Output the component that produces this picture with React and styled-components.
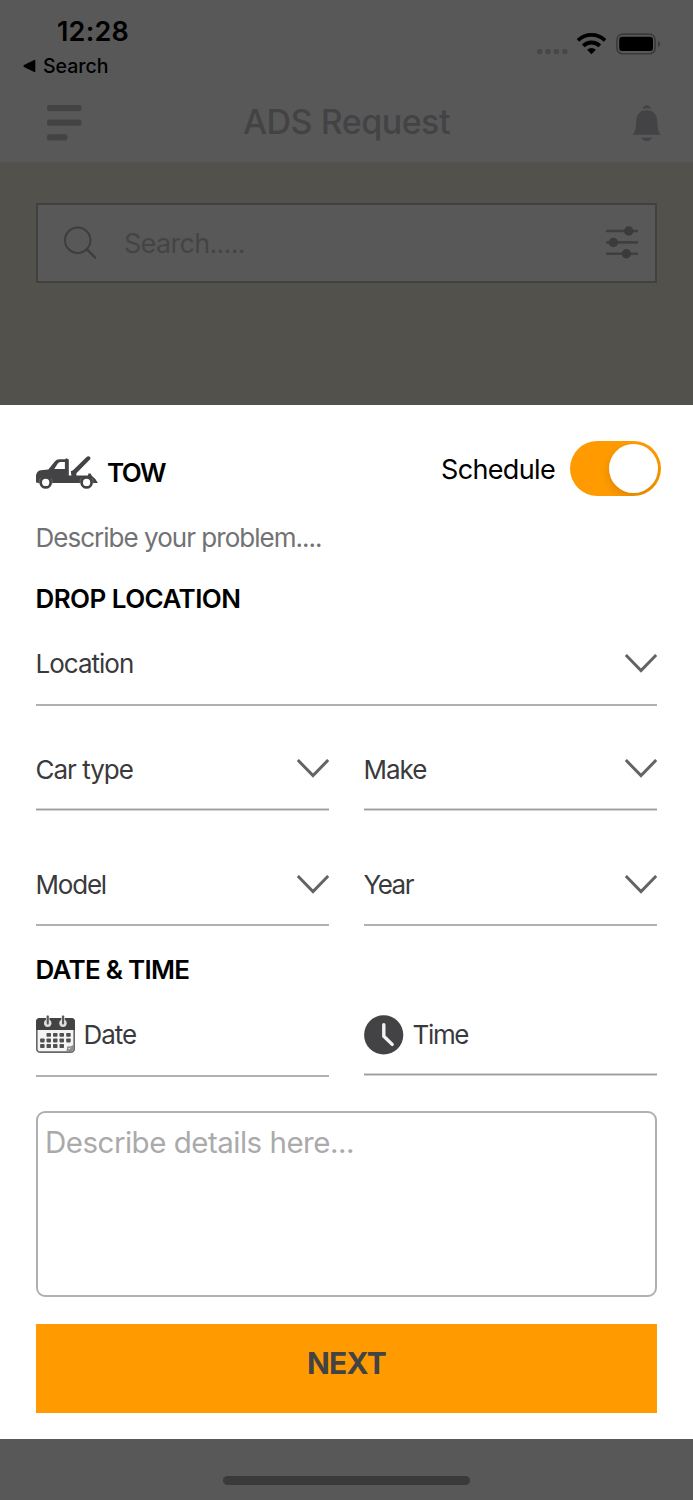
import React, { useState } from "react";
import styled, { createGlobalStyle } from "styled-components";

const GlobalStyle = createGlobalStyle`
    * {
        box-sizing: border-box;
    }

    body {
        margin: 0;
        font-family: Inter, "Liberation Sans", sans-serif;
        background-color: #585858;
    }

    button,
    input,
    textarea {
        font-family: inherit;
        border: none;
        outline: none;
        padding: 0;
    }
`;

const Screen = styled.div`
    display: flex;
    flex-direction: column;
    width: 693px;
    height: 1500px;
    overflow: hidden;
    background-color: #585858;

    svg {
        display: block;
        flex-shrink: 0;
    }
`;

const Header = styled.header`
    height: 162px;
`;

const StatusBar = styled.div`
    display: flex;
    justify-content: space-between;
    height: 84px;
    padding: 7px 32px 0 23px;
`;

const Clock = styled.div`
    padding-left: 34px;
    font-size: 27px;
    font-weight: 600;
    line-height: 49px;
    letter-spacing: 0.2px;
`;

const BackLink = styled.div`
    display: flex;
    align-items: center;
    gap: 7px;
    font-size: 19.5px;
    font-weight: 500;
    line-height: 20px;
`;

const StatusIcons = styled.div`
    display: flex;
    padding-top: 26px;

    svg:nth-child(2) {
        margin: 0 10px 0 9px;
    }
`;

const AppBar = styled.div`
    display: grid;
    grid-template-columns: 1fr auto 1fr;
    align-items: center;
    height: 78px;
    padding: 0 31px;
`;

const MenuButton = styled.button`
    justify-self: start;
    margin-left: 16px;
    background: none;
`;

const BellButton = styled.button`
    justify-self: end;
    background: none;
`;

const Title = styled.h1`
    margin: 0;
    padding-bottom: 3px;
    font-size: 34px;
    font-weight: 500;
    line-height: 40px;
    letter-spacing: -0.5px;
    color: #434345;
`;

const MapArea = styled.div`
    height: 243px;
    padding: 41px 36px 0;
    background-color: #53514b;
`;

const SearchBox = styled.div`
    display: flex;
    align-items: center;
    height: 80px;
    padding: 0 16px 0 26px;
    border: 2px solid #414142;
    background-color: #585858;
`;

const SearchText = styled.span`
    flex: 1;
    padding-left: 27px;
    font-size: 27px;
    font-weight: 400;
    letter-spacing: -0.7px;
    color: #444445;
`;

const Sheet = styled.main`
    display: flex;
    flex-direction: column;
    height: 1034px;
    padding: 36px 36px 0;
    background-color: #fff;
`;

const SheetTop = styled.div`
    display: flex;
    align-items: center;
    height: 55px;
    margin-right: -4px;
`;

const Service = styled.div`
    display: flex;
    align-items: center;
    flex: 1;
    gap: 9px;
    padding-top: 7px;
`;

const ServiceName = styled.span`
    font-size: 26px;
    font-weight: 600;
    letter-spacing: -1.5px;
`;

const ScheduleLabel = styled.span`
    padding-top: 1px;
    font-size: 27px;
    letter-spacing: -0.65px;
`;

const Toggle = styled.button`
    display: flex;
    align-items: center;
    justify-content: ${({ $on }) => ($on ? "flex-end" : "flex-start")};
    width: 91px;
    height: 55px;
    margin-left: 15px;
    padding: 0 3px;
    border-radius: 28px;
    background-color: ${({ $on }) => ($on ? "#ff9b00" : "#e9e9ea")};
    overflow: hidden;
`;

const Knob = styled.span`
    width: 49px;
    height: 49px;
    border-radius: 50%;
    background-color: #fff;
    box-shadow: 0 4px 10px rgba(0, 0, 0, 0.14);
`;

const Problem = styled.div`
    font-size: 26px;
    line-height: 83px;
    letter-spacing: -0.98px;
    text-indent: -0.5px;
    color: #727274;
`;

const SectionTitle = styled.h2`
    margin: 0;
    font-size: 26px;
    font-weight: 600;
    line-height: ${({ $tall }) => ($tall ? "88px" : "39px")};
    height: ${({ $tall }) => ($tall ? "68px" : "39px")};
    letter-spacing: ${({ $spacing }) => $spacing}px;
    text-indent: -0.5px;
`;

const FieldRow = styled.div`
    display: grid;
    grid-template-columns: 1fr 1fr;
    align-items: start;
    gap: 35px;
`;

// soft: 양쪽이 옅은 얇은 밑줄
const Field = styled.div`
    display: flex;
    align-items: center;
    justify-content: space-between;
    height: ${({ $height }) => $height}px;
    padding-top: ${({ $shift }) => $shift}px;
    border-bottom: 2px solid #b0b0b0;
    ${({ $soft }) =>
        $soft &&
        `
        border-bottom: 1px solid #9c9c9c;
        box-shadow: inset 0 -1px 0 #d4d4d4, 0 1px 0 #d4d4d4;
    `}

    svg:last-child {
        margin-top: -1px;
    }
`;

const PickerField = styled(Field)`
    justify-content: flex-start;
    gap: 9px;
`;

const FieldLabel = styled.span`
    font-size: 26px;
    letter-spacing: ${({ $spacing = -1 }) => $spacing}px;
    text-indent: -0.5px;
    color: #3a3a3c;
`;

const Details = styled.textarea`
    width: 100%;
    height: 186px;
    margin-top: 34px;
    padding: 10px 7px;
    border: 2px solid #b0b0b0;
    border-radius: 9px;
    font-size: 29.5px;
    line-height: 38px;
    letter-spacing: -0.5px;
    resize: none;

    &::placeholder {
        color: #aaaaab;
        opacity: 1;
    }
`;

const NextButton = styled.button`
    height: 89px;
    margin-top: 27px;
    padding-bottom: 11px;
    background-color: #ff9b00;
    font-size: 30px;
    font-weight: 700;
    letter-spacing: -0.8px;
    color: #434345;
`;

const Footer = styled.footer`
    display: flex;
    flex: 1;
    justify-content: center;
    padding-top: 37px;
`;

const HomeIndicator = styled.div`
    width: 247px;
    height: 9px;
    border-radius: 5px;
    background-color: #3a3a3a;
`;

const ChevronIcon = () => (
    <svg width="32" height="19" viewBox="0 0 32 19" fill="none">
        <path d="M0.8 1 L16 16.6 L31.2 1" stroke="#646466" strokeWidth="3" />
    </svg>
);

const TowTruckIcon = () => (
    <svg width="62" height="33" viewBox="0 0 62 33">
        <path
            fill="#434345"
            fillRule="evenodd"
            d="M0 26.4 V19.5 Q0.6 15 4.7 14.3 L12.3 13.6 L19 5.2 Q20.4 3.2 23.5 3.2 H29 L30.3 2.3 L32.8 3.4 V19.4 H35.4 L34.8 15.2 L37 14.3 L50.6 0.9 Q52.3 -0.4 53.9 0.8 Q55 2.2 53.9 3.6 L40.4 17.3 V19.4 H52 L52.4 17.6 L54.6 17.6 L56 19.9 Q59.8 22.4 61.9 27 H2.8 Z M18.3 12.9 H28.9 V6 H24.4 Q22.6 6 21.6 7.8 Z"
        />
        <circle cx="9.7" cy="26.4" r="5" fill="#fff" stroke="#434345" strokeWidth="2.7" />
        <circle cx="50.6" cy="26.4" r="5" fill="#fff" stroke="#434345" strokeWidth="2.7" />
        <path
            d="M3.1 27.6 Q2.8 24 4.6 22 M14.8 22 Q16.6 24 16.3 27.6 M44 27.6 Q43.7 24 45.5 22 M55.7 22 Q57.5 24 57.2 27.6"
            fill="none"
            stroke="#77777a"
            strokeWidth="0.7"
        />
    </svg>
);

const CALENDAR_CELLS = [
    [12.7, 19.8], [19.2, 19.8], [25.7, 19.8], [32.4, 19.8],
    [6.3, 25.4], [12.7, 25.4], [19.2, 25.4], [25.7, 25.4], [32.4, 25.4],
    [6.3, 31], [12.7, 31], [19.2, 31], [25.7, 31],
];

const CalendarIcon = () => (
    <svg width="39" height="39" viewBox="0 0 39 39">
        <rect x="0.8" y="3.8" width="37.4" height="33.4" rx="3.5" fill="#f4f4f4" stroke="#68686a" strokeWidth="1.7" />
        <path fill="#434345" d="M0 15 V6.5 Q0 3 3.5 3 H35.5 Q39 3 39 6.5 V15 Z" />
        <circle cx="11.7" cy="8.2" r="3.7" fill="#dedede" />
        <circle cx="27" cy="8.2" r="3.7" fill="#dedede" />
        <rect x="9.9" y="0" width="3.6" height="9.5" rx="1.8" fill="#dedede" />
        <rect x="25.2" y="0" width="3.6" height="9.5" rx="1.8" fill="#dedede" />
        <rect x="10.7" y="0.4" width="2.1" height="9" rx="1" fill="#58585a" />
        <rect x="26" y="0.4" width="2.1" height="9" rx="1" fill="#58585a" />
        {CALENDAR_CELLS.map(([x, y]) => (
            <rect key={`${x}-${y}`} x={x - 2.2} y={y - 1.9} width="4.5" height="3.9" rx="0.8" fill="#505052" />
        ))}
        <path fill="#8b8b8d" d="M30.3 37 L31.3 31.2 Q34.5 32.5 37.8 29.6 V34 L35.2 37 Z" />
        <path fill="#f4f4f4" d="M32.2 34.8 L32.8 32.9 Q34.5 33.2 36 32.3 Z" />
    </svg>
);

const ClockIcon = () => (
    <svg width="40" height="40" viewBox="0 0 40 40" fill="none">
        <circle cx="19.7" cy="19.9" r="19.6" fill="#434345" />
        <path d="M19.8 9.8 V21.2 L28.2 29.4" stroke="#f2f2f2" strokeWidth="3.4" strokeLinecap="round" strokeLinejoin="round" />
    </svg>
);

const MenuIcon = () => (
    <svg width="35" height="36" viewBox="0 0 35 36" fill="#434345">
        <rect x="0" y="0" width="34.5" height="6.2" rx="2.2" />
        <rect x="0" y="14.6" width="34.5" height="6.2" rx="2.2" />
        <rect x="0" y="29.2" width="20.5" height="6.2" rx="2.2" />
    </svg>
);

const BellIcon = () => (
    <svg width="30" height="37" viewBox="0 0 30 37" fill="#434345">
        <path d="M10.6 4 Q11.6 0.2 14.7 0.2 Q17.8 0.2 18.8 4 Q14.7 2.7 10.6 4 Z" />
        <path d="M14.7 5.2 C21.6 5.2 25 9.7 25.2 15.5 C25.4 23.8 26.2 27 29 29.8 H0.5 C3.3 27 4 23.8 4.2 15.5 C4.4 9.7 7.8 5.2 14.7 5.2 Z" />
        <path d="M9.2 32.2 Q14.7 33.4 20.2 32.2 Q18.5 36 14.7 36 Q10.9 36 9.2 32.2 Z" />
    </svg>
);

const SearchIcon = () => (
    <svg width="33" height="34" viewBox="0 0 33 34" fill="none" stroke="#3d3d3f" strokeWidth="2">
        <circle cx="13.7" cy="14.2" r="12.7" />
        <path d="M22.8 23.4 L31.2 31.6" strokeLinecap="round" strokeWidth="2.3" />
    </svg>
);

const FilterIcon = () => (
    <svg width="33" height="34" viewBox="0 0 33 34" fill="#3b3b3d">
        <path d="M0 5 H32 M0 16.4 H32 M0 27.8 H32" stroke="#3f3f41" strokeWidth="2.6" />
        <circle cx="22.7" cy="5" r="4.7" />
        <circle cx="7.4" cy="16.4" r="4.7" />
        <circle cx="20.4" cy="27.8" r="4.7" />
    </svg>
);

const SignalIcon = () => (
    <svg width="31" height="22" viewBox="0 0 31 22" fill="#474747">
        <rect x="0" y="16" width="5.3" height="5.2" rx="1.8" />
        <rect x="8.4" y="16" width="5.3" height="5.2" rx="1.8" />
        <rect x="16.8" y="16" width="5.3" height="5.2" rx="1.8" />
        <rect x="25.2" y="16" width="5.3" height="5.2" rx="1.8" />
    </svg>
);

const WifiIcon = () => (
    <svg width="29" height="22" viewBox="0 0 29 22" fill="none" stroke="#000">
        <path d="M0.9 7.5 A19.4 19.4 0 0 1 28.1 7.5" strokeWidth="3.8" />
        <path d="M6.2 12.9 A11.8 11.8 0 0 1 22.8 12.9" strokeWidth="3.9" />
        <path d="M10.1 16.8 A6.3 6.3 0 0 1 18.9 16.8 L14.5 21.2 Z" fill="#000" stroke="none" />
    </svg>
);

const BatteryIcon = () => (
    <svg width="45" height="22" viewBox="0 0 45 22">
        <rect x="0.9" y="1.1" width="38.2" height="19.7" rx="5.8" fill="none" stroke="#3a3a3a" strokeWidth="1.6" />
        <rect x="3.2" y="3.7" width="33.8" height="14.4" rx="3" fill="#000" />
        <path d="M42 8 Q44.2 9 44.2 11 Q44.2 13 42 14 Z" fill="#3a3a3a" />
    </svg>
);

const BackArrowIcon = () => (
    <svg width="13" height="14" viewBox="0 0 13 14">
        <path d="M0.4 7 Q0.4 6.4 1 6 L11.2 0.9 Q12.3 0.5 12.3 1.6 V12.4 Q12.3 13.5 11.2 13.1 L1 8 Q0.4 7.6 0.4 7 Z" />
    </svg>
);

const SelectField = ({ label, height, shift, soft, spacing }) => (
    <Field $height={height} $shift={shift} $soft={soft}>
        <FieldLabel $spacing={spacing}>{label}</FieldLabel>
        <ChevronIcon />
    </Field>
);

const App = () => {
    const [schedule, setSchedule] = useState(true);

    return (
        <>
            <GlobalStyle />
            <Screen>
                <Header>
                    <StatusBar>
                        <div>
                            <Clock>12:28</Clock>
                            <BackLink>
                                <BackArrowIcon />
                                Search
                            </BackLink>
                        </div>
                        <StatusIcons>
                            <SignalIcon />
                            <WifiIcon />
                            <BatteryIcon />
                        </StatusIcons>
                    </StatusBar>
                    <AppBar>
                        <MenuButton>
                            <MenuIcon />
                        </MenuButton>
                        <Title>ADS Request</Title>
                        <BellButton>
                            <BellIcon />
                        </BellButton>
                    </AppBar>
                </Header>

                <MapArea>
                    <SearchBox>
                        <SearchIcon />
                        <SearchText>Search.....</SearchText>
                        <FilterIcon />
                    </SearchBox>
                </MapArea>

                <Sheet>
                    <SheetTop>
                        <Service>
                            <TowTruckIcon />
                            <ServiceName>TOW</ServiceName>
                        </Service>
                        <ScheduleLabel>Schedule</ScheduleLabel>
                        <Toggle $on={schedule} onClick={() => setSchedule(!schedule)}>
                            <Knob />
                        </Toggle>
                    </SheetTop>
                    <Problem>Describe your problem....</Problem>

                    <SectionTitle $spacing={-0.56}>DROP LOCATION</SectionTitle>
                    <SelectField label="Location" height={88} shift={5} />
                    <FieldRow>
                        <SelectField label="Car type" height={104} shift={23} soft />
                        <SelectField label="Make" height={104} shift={23} soft />
                    </FieldRow>
                    <FieldRow>
                        <SelectField label="Model" height={116} shift={35} spacing={-1.2} />
                        <SelectField label="Year" height={116} shift={35} spacing={-1.5} />
                    </FieldRow>

                    <SectionTitle $tall $spacing={-0.72}>
                        DATE &amp; TIME
                    </SectionTitle>
                    <FieldRow>
                        <PickerField $height={83} $shift={0}>
                            <CalendarIcon />
                            <FieldLabel>Date</FieldLabel>
                        </PickerField>
                        <PickerField $height={81} $shift={1} $soft>
                            <ClockIcon />
                            <FieldLabel $spacing={-1.35}>Time</FieldLabel>
                        </PickerField>
                    </FieldRow>

                    <Details placeholder="Describe details here..." />
                    <NextButton>NEXT</NextButton>
                </Sheet>

                <Footer>
                    <HomeIndicator />
                </Footer>
            </Screen>
        </>
    );
};

export default App;
